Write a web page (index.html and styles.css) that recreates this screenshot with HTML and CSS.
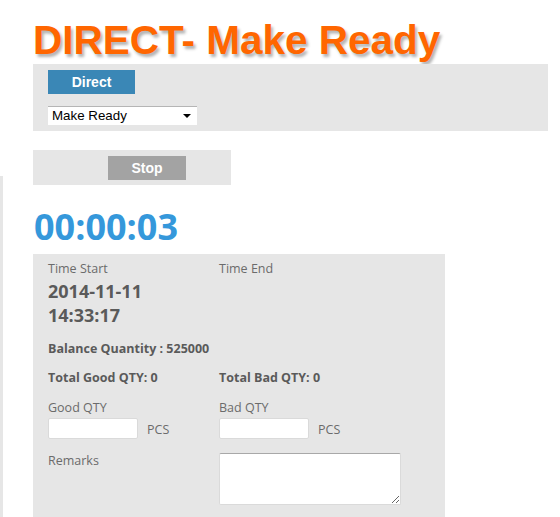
FILE: index.html
```html
<!DOCTYPE html>
<html>
<head>
<meta charset="utf-8">
<link rel="stylesheet" href="styles.css">
</head>
<body>
<div class="page">
  <div class="strip"></div>
  <div class="main">
    <h1 class="title">DIRECT- Make Ready</h1>
    <div class="panel panel-top">
      <button class="btn btn-blue">Direct</button>
      <div class="select-wrap">
        <select class="select">
          <option>Make Ready</option>
        </select>
      </div>
    </div>
    <div class="panel panel-stop">
      <button class="btn btn-gray">Stop</button>
    </div>
    <div class="timer">00:00:03</div>
    <div class="panel panel-form">
      <div class="grid">
        <div class="label">Time Start</div>
        <div class="label">Time End</div>
        <div class="datetime">2014-11-11<br>14:33:17</div>
        <div></div>
        <div class="strong balance">Balance Quantity : 525000</div>
        <div></div>
        <div class="strong total">Total Good QTY: 0</div>
        <div class="strong total">Total Bad QTY: 0</div>
        <div class="field">
          <div class="label">Good QTY</div>
          <div class="input-row"><input class="input" type="text"><span class="unit">PCS</span></div>
        </div>
        <div class="field">
          <div class="label">Bad QTY</div>
          <div class="input-row"><input class="input" type="text"><span class="unit">PCS</span></div>
        </div>
        <div class="label remarks">Remarks</div>
        <div class="remarks-box"><textarea class="textarea"></textarea></div>
      </div>
    </div>
  </div>
</div>
</body>
</html>
```
FILE: styles.css
```css
html, body {
  margin: 0;
  padding: 0;
  background: #ffffff;
}
.page {
  display: flex;
  align-items: stretch;
}
.strip {
  width: 3px;
  margin-top: 176px;
  background: #e6e6e6;
  flex: none;
}
.main {
  margin-left: 30px;
  padding-top: 20px;
  display: flex;
  flex-direction: column;
  align-items: flex-start;
}
.title {
  margin: 0 0 3px 0;
  font-family: "Liberation Sans", Arial, sans-serif;
  font-weight: bold;
  font-size: 40.5px;
  line-height: 41px;
  color: #ff6600;
  text-shadow: 2px 3px 3px rgba(0, 0, 0, 0.3);
  white-space: nowrap;
}
.panel {
  background: #e6e6e6;
  box-sizing: border-box;
}
.panel-top {
  width: 515px;
  height: 67px;
  padding: 6px 15px 6px 15px;
  display: flex;
  flex-direction: column;
  align-items: flex-start;
  gap: 12px;
}
.btn {
  border: none;
  margin: 0;
  padding: 0;
  height: 24px;
  font-family: "Liberation Sans", Arial, sans-serif;
  font-weight: bold;
  font-size: 14px;
  color: #ffffff;
  cursor: pointer;
}
.btn-blue {
  width: 87px;
  background: #3a87b6;
}
.btn-gray {
  width: 78px;
  background: #a3a3a3;
}
.select-wrap {
  position: relative;
  width: 149px;
  height: 19px;
}
.select {
  -webkit-appearance: none;
  appearance: none;
  width: 149px;
  height: 19px;
  box-sizing: border-box;
  margin: 0;
  padding: 0 0 0 4px;
  border: none;
  border-top: 1px solid #b5b5b5;
  border-radius: 0;
  background: #ffffff;
  font-family: "Liberation Sans", Arial, sans-serif;
  font-size: 13.33px;
  line-height: 18px;
  color: #000000;
}
.select-wrap::after {
  content: "";
  position: absolute;
  right: 6px;
  top: 8px;
  border-left: 4px solid transparent;
  border-right: 4px solid transparent;
  border-top: 4px solid #000000;
  pointer-events: none;
}
.panel-stop {
  margin-top: 19px;
  width: 198px;
  height: 35px;
  padding: 6px 0 5px 75px;
}
.timer {
  margin: 22px 0 7px 1px;
  height: 40px;
  font-family: "Open Sans", sans-serif;
  font-weight: bold;
  font-size: 36px;
  line-height: 40px;
  color: #3598db;
}
.panel-form {
  width: 412px;
  padding: 6px 15px 20px 15px;
}
.grid {
  display: grid;
  grid-template-columns: 171px 1fr;
  font-family: "Open Sans", sans-serif;
  font-size: 12.5px;
  line-height: 18px;
}
.label {
  color: #6b6b6b;
}
.datetime {
  margin-top: 1px;
  font-weight: bold;
  font-size: 18px;
  line-height: 24px;
  color: #5a5a5a;
}
.strong {
  font-weight: bold;
  color: #5a5a5a;
  white-space: nowrap;
}
.balance {
  margin-top: 13px;
}
.total {
  margin-top: 11px;
}
.field {
  margin-top: 12px;
}
.input-row {
  display: flex;
  align-items: center;
  margin-top: 1px;
}
.input {
  width: 90px;
  height: 21px;
  box-sizing: border-box;
  margin: 0;
  border: 1px solid #dadada;
  border-radius: 2px;
  background: #ffffff;
  padding: 0 4px;
}
.unit {
  margin-left: 9px;
  color: #6b6b6b;
  margin-top: 3px;
}
.remarks {
  margin-top: 13px;
}
.remarks-box {
  margin-top: 14px;
}
.textarea {
  display: block;
  width: 182px;
  height: 52px;
  box-sizing: border-box;
  margin: 0;
  border: 1px solid #dadada;
  border-top-color: #a8a8a8;
  border-radius: 2px;
  background: #ffffff;
}
```
